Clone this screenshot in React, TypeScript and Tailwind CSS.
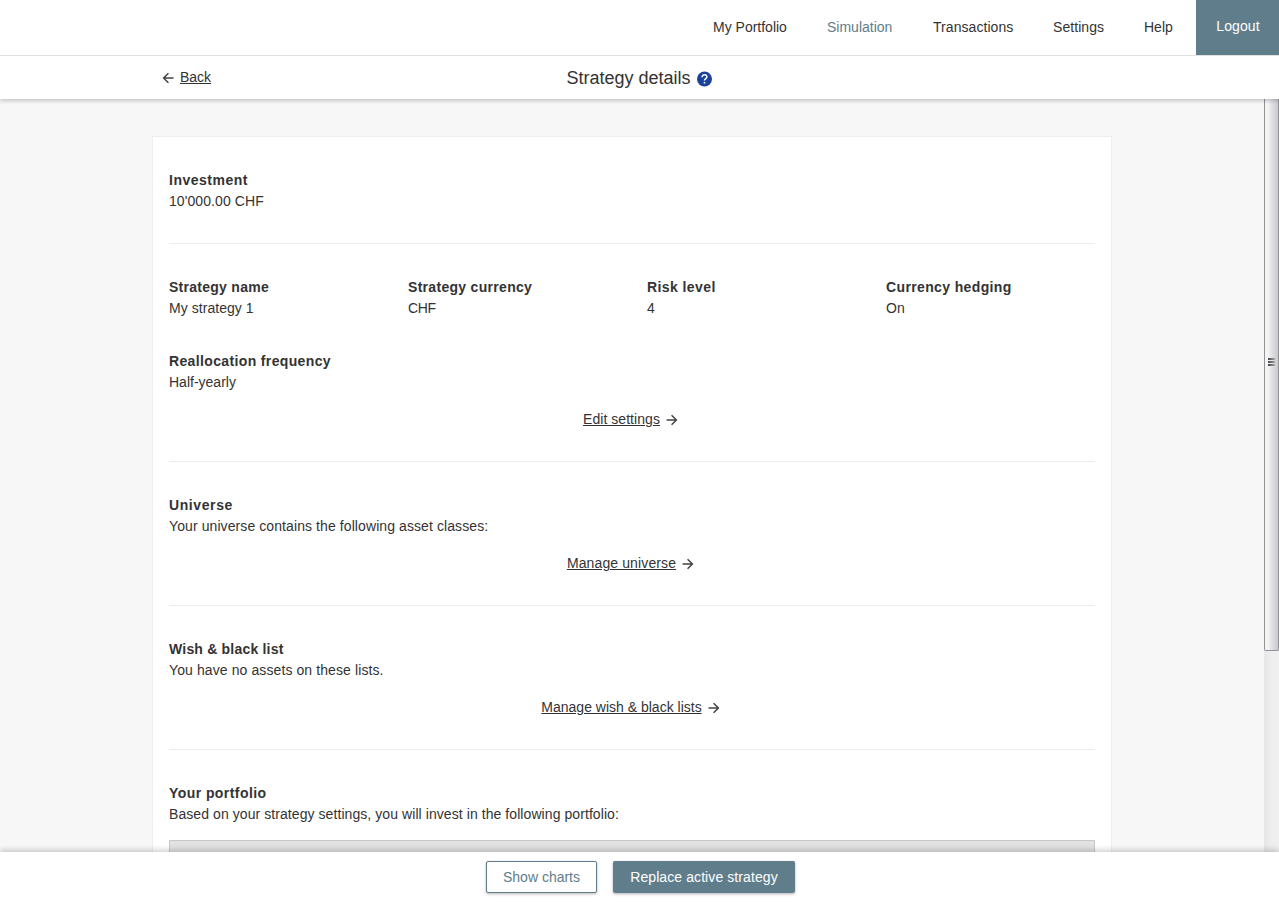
import type { ReactNode } from 'react';

const NAV = [
  { label: 'My Portfolio', style: 'w-[74px]' },
  { label: 'Simulation', style: 'w-[66px] text-[#607d8b]' },
  { label: 'Transactions', style: 'w-[80px] tracking-[0.06px]' },
  { label: 'Settings', style: 'w-[51px] tracking-[0.06px]' },
  { label: 'Help', style: 'w-[28px]' },
];

function Arrow({ left = false }: { left?: boolean }) {
  return (
    <svg width="12" height="12" viewBox="0 0 12 12" fill="none" stroke="#444" strokeWidth="1.5" className={left ? 'shrink-0 -scale-x-100' : 'shrink-0'}>
      <path d="M0.5 6H10.2M5.6 1.2L10.4 6L5.6 10.8" />
    </svg>
  );
}

function Field({ title, value, titleStyle, valueStyle = '' }: { title: string; value: string; titleStyle: string; valueStyle?: string }) {
  return (
    <div>
      <h2 className={`font-bold ${titleStyle}`}>{title}</h2>
      <p className={valueStyle}>{value}</p>
    </div>
  );
}

function Section({ children }: { children: ReactNode }) {
  return <section className="border-b border-[#eee] pt-[33px] pb-[31px]">{children}</section>;
}

function ActionLink({ label, linkStyle = '' }: { label: string; linkStyle?: string }) {
  return (
    <div className="mt-4 flex items-center justify-center gap-[6px] pr-[3px]">
      <a href="#" className={`underline ${linkStyle}`}>{label}</a>
      <Arrow />
    </div>
  );
}

function Grip() {
  return <div className="h-[2px] w-[7px] bg-linear-to-r from-[#444] to-[#aaa]" />;
}

function Scrollbar() {
  return (
    <div className="h-full w-[15px] shrink-0 bg-linear-to-r from-[#e6e6e6] via-[#eee] to-[#f0f0f0]">
      <div className="flex h-[552px] flex-col items-center justify-center gap-[1px] rounded-b-[2px] border border-t-0 border-[#929297] bg-linear-to-r from-[#f5f5f5] from-20% via-[#dcdce0] via-60% to-[#c8c8ce] pr-[1px] pb-[26px]">
        <Grip />
        <Grip />
        <Grip />
      </div>
    </div>
  );
}

export default function App() {
  return (
    <div className="flex h-[902px] w-[1279px] flex-col overflow-hidden bg-[#f7f7f7] font-['Liberation_Sans',Arial,sans-serif] text-[14px] leading-[21px] text-[#333]">
      <nav className="flex h-14 shrink-0 items-start justify-end border-b border-[#e6e6e6] bg-white">
        <div className="flex gap-10 pt-[17px] pr-6">
          {NAV.map((item) => (
            <a key={item.label} href="#" className={`whitespace-nowrap ${item.style}`}>{item.label}</a>
          ))}
        </div>
        <button className="h-[55px] w-[83px] bg-[#607d8b] pb-[2px] pl-[1px] tracking-[0.1px] text-white">Logout</button>
      </nav>

      <header className="relative z-10 grid h-[43px] shrink-0 grid-cols-3 items-center bg-white shadow-[0_2px_4px_rgba(0,0,0,0.2)]">
        <div className="flex items-center gap-[6px] pl-[162px]">
          <Arrow left />
          <a href="#" className="underline">Back</a>
        </div>
        <div className="flex items-center justify-center gap-[6px]">
          <h1 className="pt-[2px] text-[18px]">Strategy details</h1>
          <svg width="16" height="16" viewBox="0 0 16 16" className="mt-[2px]">
            <circle cx="7.5" cy="8" r="7.5" fill="#1b429b" />
            <path d="M5.1 6.2C5.1 4.7 6.1 3.8 7.5 3.8S9.9 4.7 9.9 6C9.9 7.6 7.5 7.7 7.5 9.6" fill="none" stroke="#fff" strokeWidth="1.5" />
            <path d="M6.7 10.9h1.6v1.6H6.7z" fill="#fff" />
          </svg>
        </div>
      </header>

      <div className="flex min-h-0 flex-1 overflow-hidden">
        <main className="flex-1 pt-[37px] pl-[152px]">
          <div className="h-[900px] w-[960px] border border-[#eee] bg-white px-4">
            <Section>
              <Field title="Investment" value="10'000.00 CHF" titleStyle="tracking-[0.5px]" valueStyle="tracking-[0.08px]" />
            </Section>
            <Section>
              <div className="grid grid-cols-[repeat(4,239px)] gap-y-8">
                <Field title="Strategy name" value="My strategy 1" titleStyle="tracking-[0.27px]" valueStyle="tracking-[0.05px]" />
                <Field title="Strategy currency" value="CHF" titleStyle="tracking-[0.3px]" valueStyle="tracking-[-0.3px]" />
                <Field title="Risk level" value="4" titleStyle="tracking-[0.42px]" />
                <Field title="Currency hedging" value="On" titleStyle="tracking-[0.37px]" />
                <Field title="Reallocation frequency" value="Half-yearly" titleStyle="tracking-[0.36px]" />
              </div>
              <ActionLink label="Edit settings" linkStyle="tracking-[0.05px]" />
            </Section>
            <Section>
              <Field title="Universe" value="Your universe contains the following asset classes:" titleStyle="tracking-[0.6px]" valueStyle="tracking-[0.09px]" />
              <ActionLink label="Manage universe" linkStyle="tracking-[0.12px]" />
            </Section>
            <Section>
              <Field title="Wish & black list" value="You have no assets on these lists." titleStyle="tracking-[0.2px]" valueStyle="tracking-[0.1px]" />
              <ActionLink label="Manage wish & black lists" />
            </Section>
            <Section>
              <Field title="Your portfolio" value="Based on your strategy settings, you will invest in the following portfolio:" titleStyle="tracking-[0.43px]" valueStyle="tracking-[0.073px]" />
              <div className="mt-[15px] h-10 border border-[#c8c8c8] bg-[#e2e2e2]" />
            </Section>
          </div>
        </main>
        <Scrollbar />
      </div>

      <footer className="relative z-10 flex h-[50px] shrink-0 justify-center gap-4 bg-white pt-[9px] pl-[2px] shadow-[0_-2px_6px_rgba(0,0,0,0.2)]">
        <button className="h-8 w-[111px] rounded-[2px] border border-[#607d8b] bg-white text-[#607d8b] shadow-[0_1px_3px_rgba(0,0,0,0.3)]">Show charts</button>
        <button className="h-8 w-[182px] rounded-[2px] bg-[#607d8b] tracking-[0.09px] text-white shadow-[0_1px_3px_rgba(0,0,0,0.3)]">Replace active strategy</button>
      </footer>
    </div>
  );
}
